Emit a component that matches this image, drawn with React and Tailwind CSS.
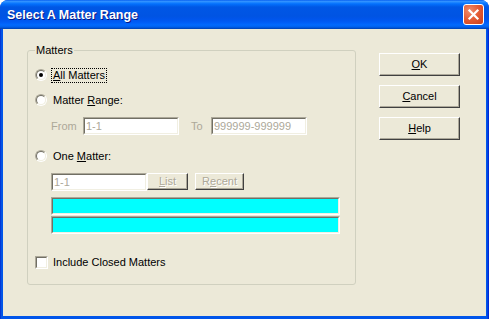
import React from "react";

const F = { fontFamily: '"Liberation Sans", Arial, sans-serif' };

function Raised({ children, className = "", disabled = false }) {
  return (
    <div
      className={
        "flex items-center justify-center bg-[#ECE9D8] border border-t-white border-l-white border-b-[#404040] border-r-[#404040] shadow-[inset_-1px_-1px_0_#ACA899] text-[11px] " +
        (disabled ? "text-[#ACA899] [text-shadow:1px_1px_0_#fff] " : "text-black ") +
        className
      }
    >
      {children}
    </div>
  );
}

function Sunken({ className = "", children }) {
  return (
    <div
      className={
        "border border-t-[#ACA899] border-l-[#ACA899] border-b-white border-r-white " + className
      }
    >
      <div className="h-full w-full border border-t-[#716F64] border-l-[#716F64] border-b-[#F1EFE2] border-r-[#F1EFE2] flex items-center overflow-hidden">
        {children}
      </div>
    </div>
  );
}

function Radio({ checked }) {
  return (
    <div className="w-[12px] h-[12px] rounded-full border border-t-[#ACA899] border-l-[#ACA899] border-b-white border-r-white shrink-0">
      <div className="w-full h-full rounded-full border border-t-[#716F64] border-l-[#716F64] border-b-[#F1EFE2] border-r-[#F1EFE2] bg-white flex items-center justify-center">
        {checked && <div className="w-[4px] h-[4px] rounded-full bg-black" />}
      </div>
    </div>
  );
}

export default function App() {
  return (
    <div className="w-[489px] h-[319px] bg-white" style={F}>
      <div className="w-[489px] h-[319px] flex flex-col rounded-t-[8px] overflow-hidden bg-[linear-gradient(90deg,#0019CF_0px,#0855DD_1px,#0055EA_2px,#0055EA_calc(100%-2px),#0019CF_100%)]">
        <div className="h-[29px] shrink-0 flex items-center justify-between pl-[7px] pr-[5px] bg-[linear-gradient(180deg,#0058EE_0%,#3593FF_4%,#288EFF_7%,#127DFF_10%,#036FFC_14%,#0262EE_20%,#0057E5_24%,#0054E3_56%,#0055EB_66%,#005BF5_76%,#026AFE_86%,#0062EF_92%,#0052D6_96%,#0040AB_100%)]">
          <span className="text-white font-bold text-[12.5px] [text-shadow:1px_1px_0_#0A1883] pt-[1px]">
            Select A Matter Range
          </span>
          <div className="w-[21px] h-[21px] rounded-[3px] border border-white bg-[radial-gradient(circle_at_30%_30%,#F08C6C_0%,#E35A33_50%,#C83E1A_100%)] flex items-center justify-center">
            <svg width="13" height="13" viewBox="0 0 13 13">
              <path d="M2.5 2.5 L10.5 10.5 M10.5 2.5 L2.5 10.5" stroke="white" strokeWidth="2.2" strokeLinecap="square" />
            </svg>
          </div>
        </div>
        <div className="flex-1 flex mx-[3px] mb-[3px] bg-[#ECE9D8] pl-[24px] pt-[21px] text-[11px] text-black">
          <div className="relative w-[329px] h-[235px] border border-[#D0D0BF] rounded-[3px] pl-[7px] flex flex-col">
            <span className="absolute left-[7px] top-[-8px] bg-[#ECE9D8] px-[1px] leading-[14px]">Matters</span>
            <div className="mt-[17px] h-[14px] flex items-center gap-[5px]">
              <Radio checked />
              <span className="outline-1 outline-dotted outline-black px-[1px] leading-[13px]">
                <u>A</u>ll Matters
              </span>
            </div>
            <div className="mt-[11px] h-[14px] flex items-center gap-[6px]">
              <Radio />
              <span>
                Matter <u>R</u>ange:
              </span>
            </div>
            <div className="mt-[10px] h-[18px] flex items-center">
              <span className="ml-[16px] w-[32px] text-[#ACA899]">From</span>
              <Sunken className="w-[96px] h-[18px] bg-white">
                <span className="pl-[1px] text-[#ACA899]">1-1</span>
              </Sunken>
              <span className="ml-[12px] w-[20px] text-[#ACA899]">To</span>
              <Sunken className="w-[96px] h-[18px] bg-white">
                <span className="pl-[1px] text-[#ACA899]">999999-999999</span>
              </Sunken>
            </div>
            <div className="mt-[14px] h-[14px] flex items-center gap-[6px]">
              <Radio />
              <span>
                One <u>M</u>atter:
              </span>
            </div>
            <div className="mt-[10px] h-[18px] flex items-start ml-[16px]">
              <Sunken className="w-[96px] h-[18px] bg-white">
                <span className="pl-[1px] text-[#ACA899]">1-1</span>
              </Sunken>
              <Raised disabled className="w-[41px] h-[17px]">
                <span>
                  <u>L</u>ist
                </span>
              </Raised>
              <Raised disabled className="ml-[7px] w-[49px] h-[17px]">
                <span>
                  R<u>e</u>cent
                </span>
              </Raised>
            </div>
            <Sunken className="mt-[6px] ml-[16px] w-[289px] h-[18px] bg-[#00FFFF]" />
            <Sunken className="mt-[1px] ml-[16px] w-[289px] h-[18px] bg-[#00FFFF]" />
            <div className="mt-[21px] h-[14px] flex items-center gap-[5px]">
              <div className="w-[13px] h-[13px] border border-t-[#ACA899] border-l-[#ACA899] border-b-white border-r-white">
                <div className="w-full h-full border border-t-[#716F64] border-l-[#716F64] border-b-[#F1EFE2] border-r-[#F1EFE2] bg-white" />
              </div>
              <span>Include Closed Matters</span>
            </div>
          </div>
          <div className="ml-[23px] mt-[3px] flex flex-col gap-[9px]">
            <Raised className="w-[81px] h-[23px]">
              <span>
                <u>O</u>K
              </span>
            </Raised>
            <Raised className="w-[81px] h-[23px]">
              <span>
                <u>C</u>ancel
              </span>
            </Raised>
            <Raised className="w-[81px] h-[23px]">
              <span>
                <u>H</u>elp
              </span>
            </Raised>
          </div>
        </div>
      </div>
    </div>
  );
}
